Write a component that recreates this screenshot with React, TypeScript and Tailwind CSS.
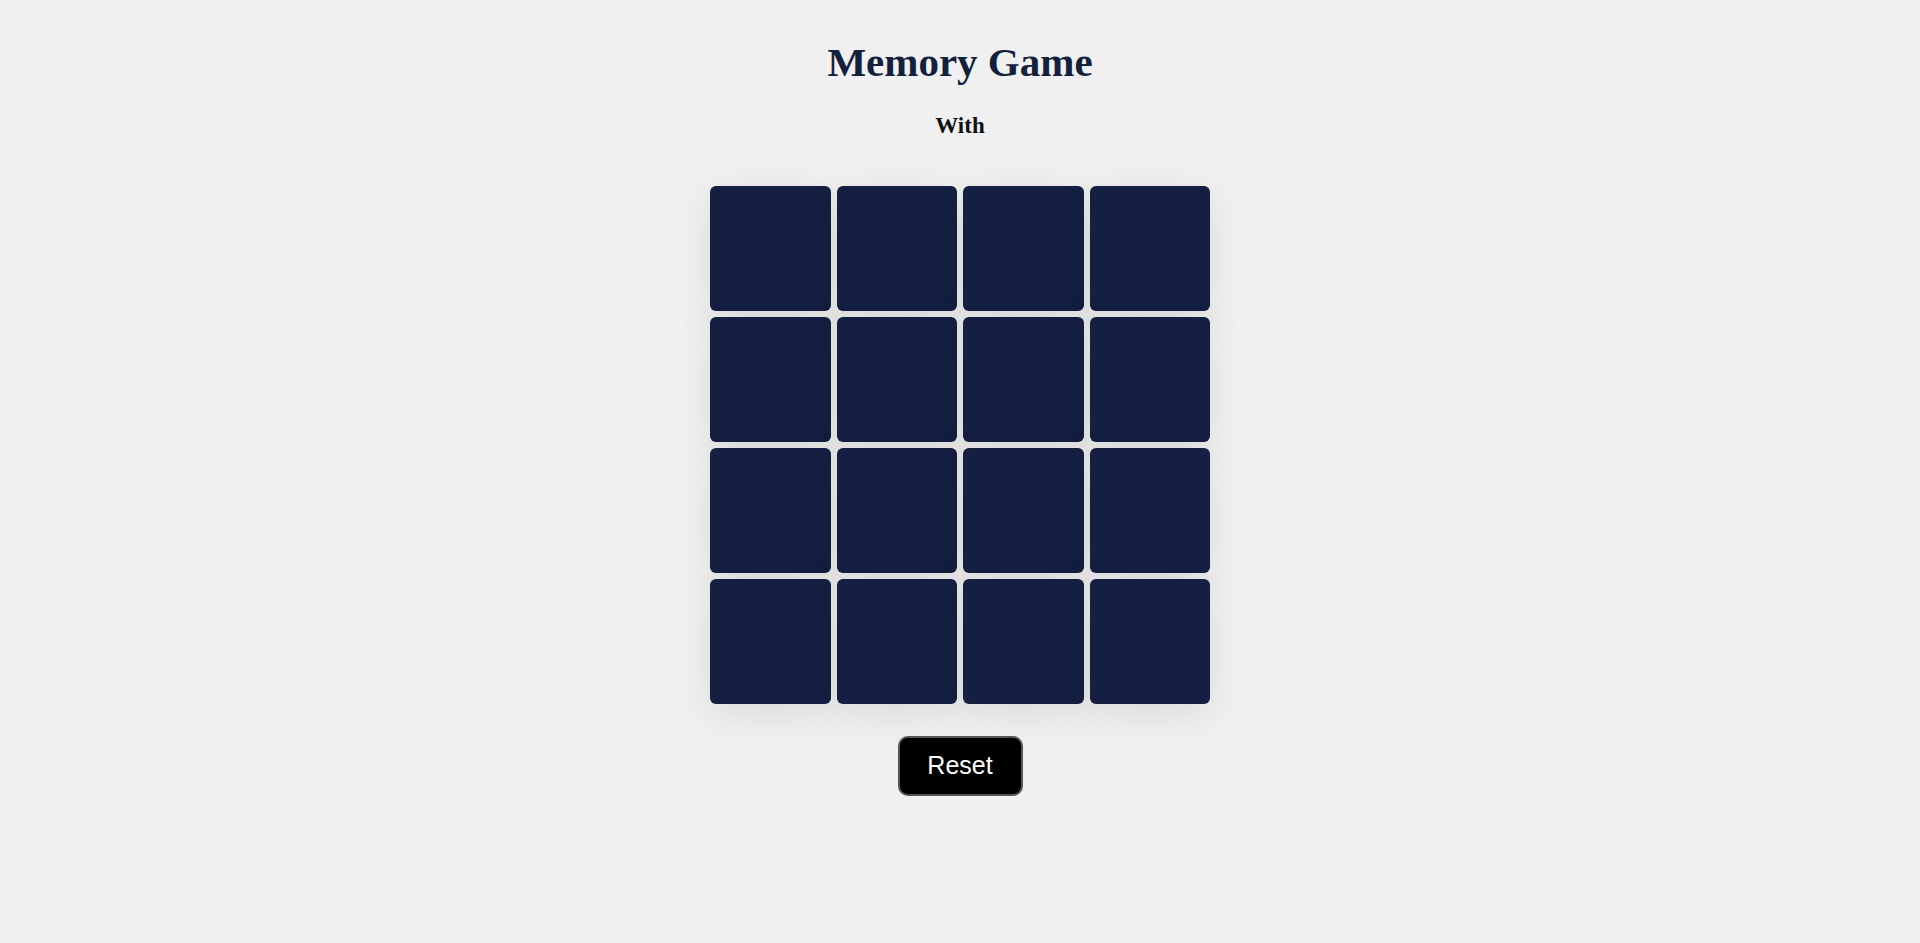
export default function App() {
  const cards = Array.from({ length: 16 }, (_, i) => i);

  return (
    <div className="flex min-h-screen flex-col items-center bg-[#f0f0f0] pt-[42px]">
      <h1 className="font-['Liberation_Serif',serif] text-[41px] font-bold leading-none text-[#14213d]">
        Memory Game
      </h1>
      <h3 className="mt-[31px] font-['Liberation_Serif',serif] text-[23px] font-bold leading-none text-[#111]">
        With
      </h3>

      <div className="mt-[49px] grid w-[500px] grid-cols-4 gap-[6px]">
        {cards.map((i) => (
          <div
            key={i}
            className="h-[125px] rounded-[6px] bg-[#141f41] shadow-[0_10px_40px_rgba(0,0,0,0.09)]"
          />
        ))}
      </div>

      <button className="mt-[32px] flex h-[60px] w-[125px] items-center justify-center rounded-[10px] border-2 border-[#555] bg-black font-['Liberation_Sans',Arial,sans-serif] text-[25px] text-white">
        Reset
      </button>
    </div>
  );
}
